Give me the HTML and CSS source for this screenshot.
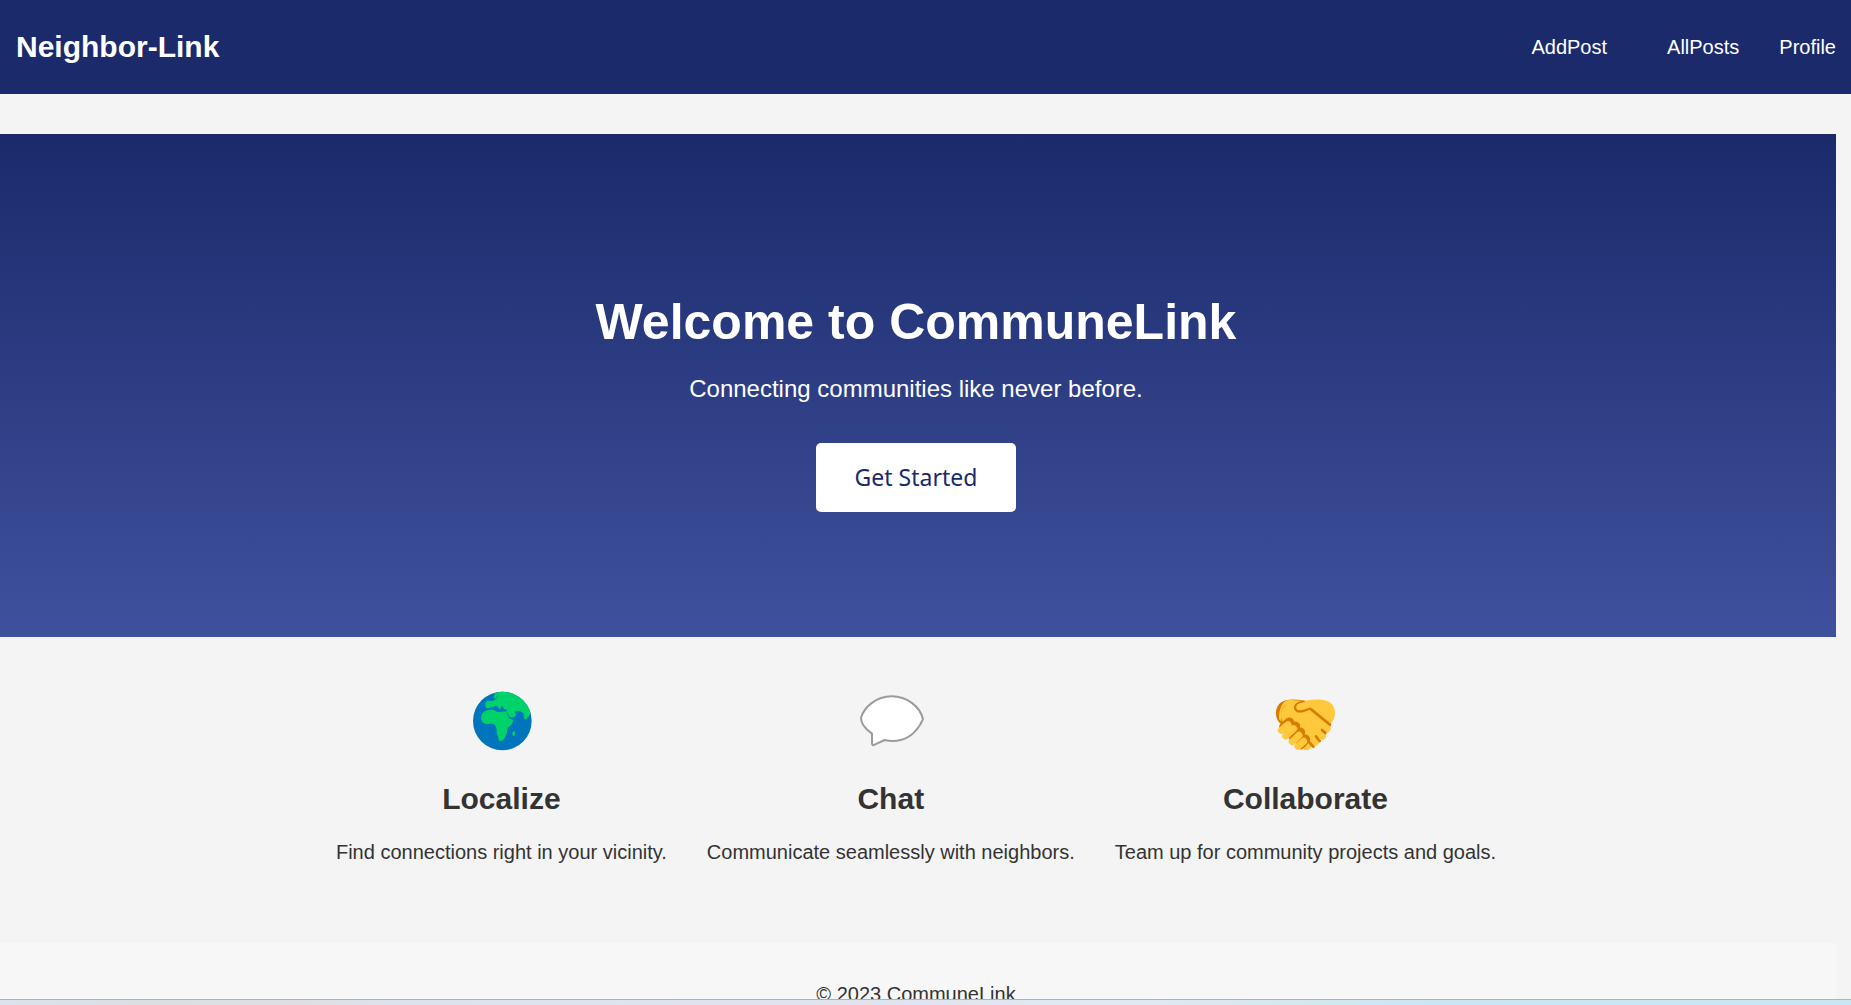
FILE: index.html
```html
<!DOCTYPE html>
<html lang="en">
<head>
    <meta charset="UTF-8">
    <meta name="viewport" content="width=device-width, initial-scale=1.0">
    <title>Neighbor-Link</title>
    <link rel="stylesheet" href="styles.css">
</head>
<body>

    <div class="page">
        <header>
            <div class="logo">Neighbor-Link</div>
            <nav>
                <a href="#" class="add-post">AddPost</a>
                <a href="#">AllPosts</a>
                <a href="#">Profile</a>
            </nav>
        </header>

        <main>
            <section class="hero">
                <h1>Welcome to CommuneLink</h1>
                <p>Connecting communities like never before.</p>
                <button type="button" class="cta">Get Started</button>
            </section>

            <section class="features">
                <div class="feature">
                    <!-- Globe -->
                    <svg class="icon" viewBox="0 0 240 240" aria-hidden="true">
                        <circle cx="124" cy="123" r="88" fill="#0074bd"/>
                        <path fill="#00d26a" d="M101 41C109 36 117 35 126 35C164 37 197 61 209 99C205 106 201 113 194 119C188 117 188 107 187 99C181 94 173 93 166 94L160 96C164 99 167 102 164 107C160 112 153 114 147 111C143 108 141 100 138 98C136 100 139 105 142 109C144 115 147 118 156 120C156 131 148 137 142 142C137 148 140 155 136 162C132 169 131 180 120 183C113 183 112 179 112 173C111 166 107 162 107 156C108 148 106 141 101 134C94 128 84 134 74 131C65 129 60 121 60 113C61 102 67 94 78 91C85 90 98 88 103 92C106 96 116 98 122 95C127 94 136 97 138 92C137 88 132 89 129 87C126 83 127 78 121 79C118 83 120 87 117 88C111 86 111 79 105 77C99 77 97 84 88 82C83 85 75 86 74 80C73 73 73 66 79 63C85 60 93 66 100 60C106 58 112 51 109 45C107 50 108 56 101 56C97 52 98 46 101 41Z"/>
                        <path fill="#00d26a" d="M158 153C163 155 163 162 160 167C156 170 153 164 154 159Z"/>
                    </svg>
                    <h2>Localize</h2>
                    <p>Find connections right in your vicinity.</p>
                </div>
                <div class="feature">
                    <!-- Speech bubble -->
                    <svg class="icon" viewBox="0 0 240 240" aria-hidden="true">
                        <path fill="#fff" stroke="#9b9b9f" stroke-width="6" stroke-linejoin="round" d="M122 49C75 49 39 82 30 113C30 130 46 149 63 161V190C63 195 66 197 71 194L101 180C116 184 134 184 149 180C180 173 205 145 216 117C207 81 169 49 122 49Z"/>
                    </svg>
                    <h2>Chat</h2>
                    <p>Communicate seamlessly with neighbors.</p>
                </div>
                <div class="feature">
                    <!-- Handshake -->
                    <svg class="icon" viewBox="0 0 240 240" aria-hidden="true">
                        <path fill="#d67d00" d="M62 61C41 67 32 83 33 104C35 119 41 128 51 133L101 176L119 209C127 213 134 207 138 199L197 137C200 127 196 117 185 112L118 62C98 59 78 57 62 61Z"/>
                        <path fill="#ffc83d" d="M66 61C87 57 101 64 120 62C143 58 166 57 184 62C205 69 213 88 209 108C207 119 202 126 196 131L142 86C137 83 133 85 130 88C119 94 103 99 95 94C89 88 90 78 97 73C73 75 63 67 52 86C46 99 48 111 49 124C42 121 39 111 45 90C49 75 57 65 66 61Z"/>
                        <path fill="#ffc83d" d="M97 73L138 86L194 134C199 139 198 149 194 154C189 159 184 160 179 157L171 149L183 164C185 173 178 181 170 179L153 170L163 184C163 194 154 200 145 199L133 187L137 200C138 208 128 213 119 209L104 176L57 130C44 113 45 93 57 80C68 69 81 64 97 73Z"/>
                        <path fill="none" stroke="#d67d00" stroke-width="8" stroke-linecap="round" stroke-linejoin="round" d="M108 69C91 72 87 84 95 91C106 99 122 91 134 85L195 134M171 150L181 159M153 169L164 183M133 187L145 200"/>
                        <path fill="#ffc83d" d="M96 73Q105 67 119 65L140 63V83Q121 92 104 92C91 90 89 81 96 73Z"/>
                        <path fill="none" stroke="#d67d00" stroke-width="5" stroke-linecap="round" d="M117 64Q93 67 91 79Q90 91 103 94Q119 92 135 85"/>
                        <path fill="none" stroke="#d67d00" stroke-width="29" stroke-linecap="round" d="M57 140L73 127M70 159L91 139M87 176L106 157M107 194L121 178"/>
                        <path fill="none" stroke="#ffc83d" stroke-width="21" stroke-linecap="round" d="M49 151L69 134M62 168L86 146M82 185L102 166M99 199L116 184"/>
                    </svg>
                    <h2>Collaborate</h2>
                    <p>Team up for community projects and goals.</p>
                </div>
            </section>
        </main>

        <footer>
            <p>© 2023 CommuneLink</p>
        </footer>
    </div>

    <div class="bottom-strip"></div>

</body>
</html>
```

FILE: styles.css
```css
:root {
    --background: #f4f4f4;
    --primary: #1b2a6b;
    --primary-light: #3f519d;
    --text: #333333;
}

* {
    box-sizing: border-box;
    margin: 0;
    padding: 0;
}

body {
    display: flex;
    flex-direction: column;
    height: 100vh;
    overflow: hidden;
    font-family: 'Liberation Sans', Arial, sans-serif;
    font-size: 20px;
    background-color: var(--background);
    color: var(--text);
}

.page {
    flex: 1;
    min-height: 0;
    overflow: hidden;
}

header {
    display: flex;
    justify-content: space-between;
    align-items: center;
    padding: 30px 15px 30px 16px;
    margin-bottom: 40px;
    background-color: var(--primary);
    color: #fff;
}

.logo {
    font-size: 30px;
    font-weight: bold;
    line-height: 34px;
}

nav {
    display: flex;
    gap: 40px;
}

nav a {
    color: #fff;
    text-decoration: none;
}

.add-post {
    margin-right: 20px;
}

main,
footer {
    margin-right: 15px;
}

/* Hero */
.hero {
    padding: 160px 24px 125px 20px;
    text-align: center;
    background: linear-gradient(to bottom, var(--primary), var(--primary-light));
    color: #fff;
}

.hero h1 {
    margin-bottom: 24px;
    font-size: 50px;
    line-height: 57px;
}

.hero p {
    margin-bottom: 40px;
    font-size: 24px;
    line-height: 28px;
}

.cta {
    display: block;
    min-width: 200px;
    margin: 0 auto;
    padding: 20px 30px;
    font-family: 'Noto Sans', sans-serif;
    font-size: 23px;
    line-height: 29px;
    border: none;
    border-radius: 5px;
    background-color: #fff;
    color: var(--primary);
    cursor: pointer;
}

/* Features */
.features {
    display: flex;
    justify-content: center;
    gap: 40px;
    padding: 43px 24px 79px 20px;
    text-align: center;
}

.icon {
    display: block;
    width: 80px;
    height: 80px;
    margin: 0 auto 22px;
}

.feature h2 {
    margin-bottom: 25px;
    font-size: 30px;
    line-height: 34px;
}

.feature p,
footer p {
    line-height: 23px;
}

footer {
    padding: 40px 24px 40px 20px;
    text-align: center;
    background-color: #f7f7f7;
}

.bottom-strip {
    height: 6px;
    border-top: 1px solid #abb3bd;
    background: linear-gradient(to right, #dce3ef, #dadfe3 8%, #dfdfe2 16%, #dce3f0 22%, #dfe4ef 45%, #e0e9f5 60%, #cbe6ef 78%, #c9e7f0);
}
```
